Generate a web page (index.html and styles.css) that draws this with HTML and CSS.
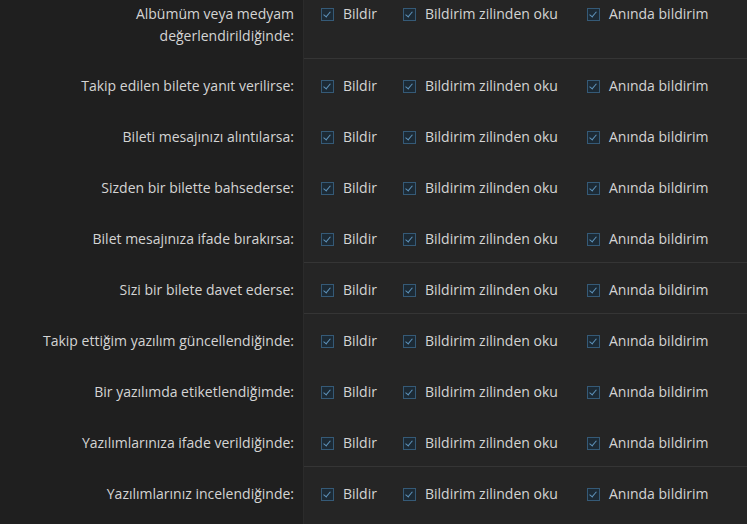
FILE: index.html
```html
<!DOCTYPE html>
<html lang="tr">
<head>
<meta charset="utf-8">
<link rel="stylesheet" href="styles.css">
</head>
<body>
<div class="table">
  <div class="row sep first">
    <div class="label">Albümüm veya medyam<br>değerlendirildiğinde:</div>
    <div class="opts">
      <label class="opt o1"><span class="cb"></span>Bildir</label>
      <label class="opt o2"><span class="cb"></span>Bildirim zilinden oku</label>
      <label class="opt"><span class="cb"></span>Anında bildirim</label>
    </div>
  </div>
  <div class="row">
    <div class="label">Takip edilen bilete yanıt verilirse:</div>
    <div class="opts">
      <label class="opt o1"><span class="cb"></span>Bildir</label>
      <label class="opt o2"><span class="cb"></span>Bildirim zilinden oku</label>
      <label class="opt"><span class="cb"></span>Anında bildirim</label>
    </div>
  </div>
  <div class="row">
    <div class="label">Bileti mesajınızı alıntılarsa:</div>
    <div class="opts">
      <label class="opt o1"><span class="cb"></span>Bildir</label>
      <label class="opt o2"><span class="cb"></span>Bildirim zilinden oku</label>
      <label class="opt"><span class="cb"></span>Anında bildirim</label>
    </div>
  </div>
  <div class="row">
    <div class="label">Sizden bir bilette bahsederse:</div>
    <div class="opts">
      <label class="opt o1"><span class="cb"></span>Bildir</label>
      <label class="opt o2"><span class="cb"></span>Bildirim zilinden oku</label>
      <label class="opt"><span class="cb"></span>Anında bildirim</label>
    </div>
  </div>
  <div class="row sep">
    <div class="label">Bilet mesajınıza ifade bırakırsa:</div>
    <div class="opts">
      <label class="opt o1"><span class="cb"></span>Bildir</label>
      <label class="opt o2"><span class="cb"></span>Bildirim zilinden oku</label>
      <label class="opt"><span class="cb"></span>Anında bildirim</label>
    </div>
  </div>
  <div class="row sep">
    <div class="label">Sizi bir bilete davet ederse:</div>
    <div class="opts">
      <label class="opt o1"><span class="cb"></span>Bildir</label>
      <label class="opt o2"><span class="cb"></span>Bildirim zilinden oku</label>
      <label class="opt"><span class="cb"></span>Anında bildirim</label>
    </div>
  </div>
  <div class="row">
    <div class="label">Takip ettiğim yazılım güncellendiğinde:</div>
    <div class="opts">
      <label class="opt o1"><span class="cb"></span>Bildir</label>
      <label class="opt o2"><span class="cb"></span>Bildirim zilinden oku</label>
      <label class="opt"><span class="cb"></span>Anında bildirim</label>
    </div>
  </div>
  <div class="row">
    <div class="label">Bir yazılımda etiketlendiğimde:</div>
    <div class="opts">
      <label class="opt o1"><span class="cb"></span>Bildir</label>
      <label class="opt o2"><span class="cb"></span>Bildirim zilinden oku</label>
      <label class="opt"><span class="cb"></span>Anında bildirim</label>
    </div>
  </div>
  <div class="row sep">
    <div class="label">Yazılımlarınıza ifade verildiğinde:</div>
    <div class="opts">
      <label class="opt o1"><span class="cb"></span>Bildir</label>
      <label class="opt o2"><span class="cb"></span>Bildirim zilinden oku</label>
      <label class="opt"><span class="cb"></span>Anında bildirim</label>
    </div>
  </div>
  <div class="row">
    <div class="label">Yazılımlarınız incelendiğinde:</div>
    <div class="opts">
      <label class="opt o1"><span class="cb"></span>Bildir</label>
      <label class="opt o2"><span class="cb"></span>Bildirim zilinden oku</label>
      <label class="opt"><span class="cb"></span>Anında bildirim</label>
    </div>
  </div>
</div>
</body>
</html>
```
FILE: styles.css
```css
html, body {
  margin: 0;
  padding: 0;
  height: 100%;
  overflow: hidden;
}
body {
  font-family: "Open Sans", "Noto Sans", sans-serif;
  font-size: 14px;
  color: #d4d4d4;
  background: linear-gradient(to right, #1f1f1f 0, #1f1f1f 303px, #2b2b2b 303px, #2b2b2b 304px, #252525 304px);
}
.table {
  margin-top: -14px;
}
.row {
  display: grid;
  grid-template-columns: 304px 1fr;
}
.label {
  text-align: right;
  padding: 16px 10px 13px 0;
  line-height: 22px;
}
.opts {
  display: flex;
  align-items: flex-start;
  padding: 16px 0 13px 17px;
  line-height: 22px;
}
.row.first .label {
  padding-top: 17px;
  padding-bottom: 12px;
}
.row.first .opts {
  padding-top: 17px;
}
.row.sep .opts {
  border-bottom: 1px solid #353535;
  padding-bottom: 12px;
}
.row.first.sep .opts {
  padding-bottom: 11px;
}
.opt {
  display: flex;
  align-items: center;
  gap: 9px;
  flex: none;
}
.opt.o1 {
  width: 82px;
}
.opt.o2 {
  width: 184px;
}
.cb {
  width: 11px;
  height: 11px;
  border: 1px solid #355a77;
  background: #1c2a35;
  position: relative;
  flex: none;
}
.cb::after {
  content: "";
  position: absolute;
  left: 3px;
  top: 1px;
  width: 3px;
  height: 6px;
  border-right: 1.5px solid #5f93ba;
  border-bottom: 1.5px solid #5f93ba;
  transform: rotate(40deg);
}
```
